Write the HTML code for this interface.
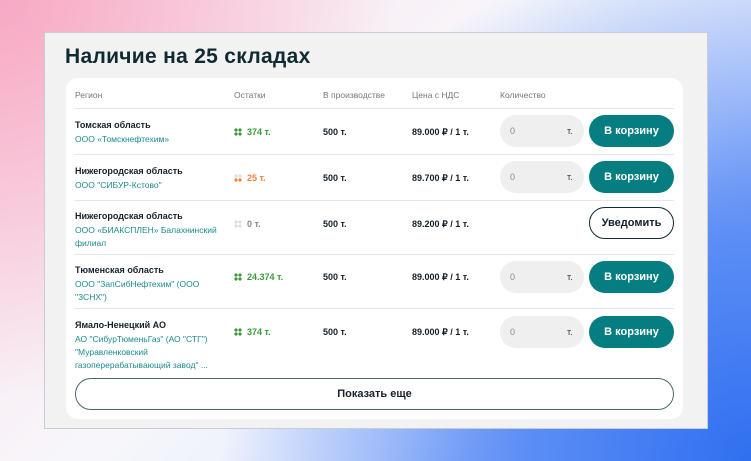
<!DOCTYPE html><html><head><meta charset="utf-8"><style>
*{margin:0;padding:0;box-sizing:border-box}
body{width:751px;height:461px;overflow:hidden;font-family:"Liberation Sans",sans-serif;position:relative;
background:radial-gradient(circle at 0% 0%,#f7a9c4 0,rgba(247,169,196,0) 45%),radial-gradient(circle at 100% 100%,#2f6ff0 0,#5b8df5 25%,rgba(120,160,250,0) 60%),linear-gradient(135deg,#fbe0ea,#f7f7fb 45%,#e6ecfd 70%,#6d9af5);}
.panel{position:absolute;left:44px;top:32px;width:664px;height:397px;background:#f2f2f2;border:1px solid #c9ccd4}
h1{position:absolute;left:20px;top:12px;font-size:21px;font-weight:700;color:#0f2a33;letter-spacing:.3px}
.card{position:absolute;left:21px;top:45px;width:617px;height:341px;background:#fff;border-radius:12px}
.t{position:absolute;font-size:9px;color:#17202a;white-space:nowrap}
.h{color:#777;font-size:8.5px}
.b{font-weight:700}
.s{color:#1a8a8e;font-size:8.5px;line-height:13px;white-space:normal;width:150px}
.line{position:absolute;left:9px;width:599px;height:1px;background:#e6e6e6}
.q{position:absolute;left:434px;width:84px;height:32px;border-radius:16px;background:#efefef;font-size:9px;color:#888}
.q span{position:absolute;top:11px}
.btn{position:absolute;left:523px;width:85px;height:32px;border-radius:16px;background:#067d80;color:#fff;font-size:11px;font-weight:700;text-align:center;line-height:33px}
.dots{display:inline-block;width:8px;height:8px;vertical-align:-1px;margin-right:5px;background:
radial-gradient(circle,var(--a) 1.6px,transparent 1.8px) 0 0/4px 4px no-repeat,radial-gradient(circle,var(--a) 1.6px,transparent 1.8px) 4px 0/4px 4px no-repeat,radial-gradient(circle,var(--c) 1.6px,transparent 1.8px) 0 4px/4px 4px no-repeat,radial-gradient(circle,var(--c) 1.6px,transparent 1.8px) 4px 4px/4px 4px no-repeat}
.g{color:#3a9a3a;font-weight:700}
</style></head><body>
<div class="panel"><h1>Наличие на 25 складах</h1>
<div class="card">
<div class="t h" style="left:9px;top:12px">Регион</div>
<div class="t h" style="left:168px;top:12px">Остатки</div>
<div class="t h" style="left:257px;top:12px">В производстве</div>
<div class="t h" style="left:346px;top:12px">Цена с НДС</div>
<div class="t h" style="left:434px;top:12px">Количество</div>
<div class="line" style="top:30px"></div>

<div class="t b" style="left:9px;top:42px">Томская область</div>
<div class="t s" style="left:9px;top:55px">ООО «Томскнефтехим»</div>
<div class="t g" style="left:168px;top:49px"><i class="dots" style="--a:#3a9a3a;--c:#3a9a3a"></i>374 т.</div>
<div class="t b" style="left:257px;top:49px">500 т.</div>
<div class="t b" style="left:346px;top:49px">89.000 ₽ / 1 т.</div>
<div class="q" style="top:37px"><span style="left:10px">0</span><span style="left:67px;color:#333">т.</span></div>
<div class="btn" style="top:37px">В корзину</div>
<div class="line" style="top:76px"></div>

<div class="t b" style="left:9px;top:88px">Нижегородская область</div>
<div class="t s" style="left:9px;top:101px">ООО "СИБУР-Кстово"</div>
<div class="t g" style="left:168px;top:95px;color:#f0823a"><i class="dots" style="--a:#ddd;--c:#f0823a"></i>25 т.</div>
<div class="t b" style="left:257px;top:95px">500 т.</div>
<div class="t b" style="left:346px;top:95px">89.700 ₽ / 1 т.</div>
<div class="q" style="top:83px"><span style="left:10px">0</span><span style="left:67px;color:#333">т.</span></div>
<div class="btn" style="top:83px">В корзину</div>
<div class="line" style="top:122px"></div>

<div class="t b" style="left:9px;top:133px">Нижегородская область</div>
<div class="t s" style="left:9px;top:146px">ООО «БИАКСПЛЕН» Балахнинский филиал</div>
<div class="t g" style="left:168px;top:141px;color:#888"><i class="dots" style="--a:#ddd;--c:#ddd"></i>0 т.</div>
<div class="t b" style="left:257px;top:141px">500 т.</div>
<div class="t b" style="left:346px;top:141px">89.200 ₽ / 1 т.</div>
<div class="btn" style="top:129px;background:#fff;color:#17202a;border:1.3px solid #0f2a33;line-height:30px">Уведомить</div>
<div class="line" style="top:176px"></div>

<div class="t b" style="left:9px;top:187px">Тюменская область</div>
<div class="t s" style="left:9px;top:200px">ООО "ЗапСибНефтехим" (ООО "ЗСНХ")</div>
<div class="t g" style="left:168px;top:194px"><i class="dots" style="--a:#3a9a3a;--c:#3a9a3a"></i>24.374 т.</div>
<div class="t b" style="left:257px;top:194px">500 т.</div>
<div class="t b" style="left:346px;top:194px">89.000 ₽ / 1 т.</div>
<div class="q" style="top:183px"><span style="left:10px">0</span><span style="left:67px;color:#333">т.</span></div>
<div class="btn" style="top:183px">В корзину</div>
<div class="line" style="top:230px"></div>

<div class="t b" style="left:9px;top:242px">Ямало-Ненецкий АО</div>
<div class="t s" style="left:9px;top:255px;width:160px">АО "СибурТюменьГаз" (АО "СТГ") "Муравленковский газоперерабатывающий завод" ...</div>
<div class="t g" style="left:168px;top:249px"><i class="dots" style="--a:#3a9a3a;--c:#3a9a3a"></i>374 т.</div>
<div class="t b" style="left:257px;top:249px">500 т.</div>
<div class="t b" style="left:346px;top:249px">89.000 ₽ / 1 т.</div>
<div class="q" style="top:238px"><span style="left:10px">0</span><span style="left:67px;color:#333">т.</span></div>
<div class="btn" style="top:238px">В корзину</div>

<div style="position:absolute;left:9px;top:300px;width:599px;height:32px;border:1.3px solid #4a6a70;border-radius:16px;text-align:center;line-height:30px;font-size:11px;font-weight:700;color:#17202a">Показать еще</div>
</div></div>
</body></html>
